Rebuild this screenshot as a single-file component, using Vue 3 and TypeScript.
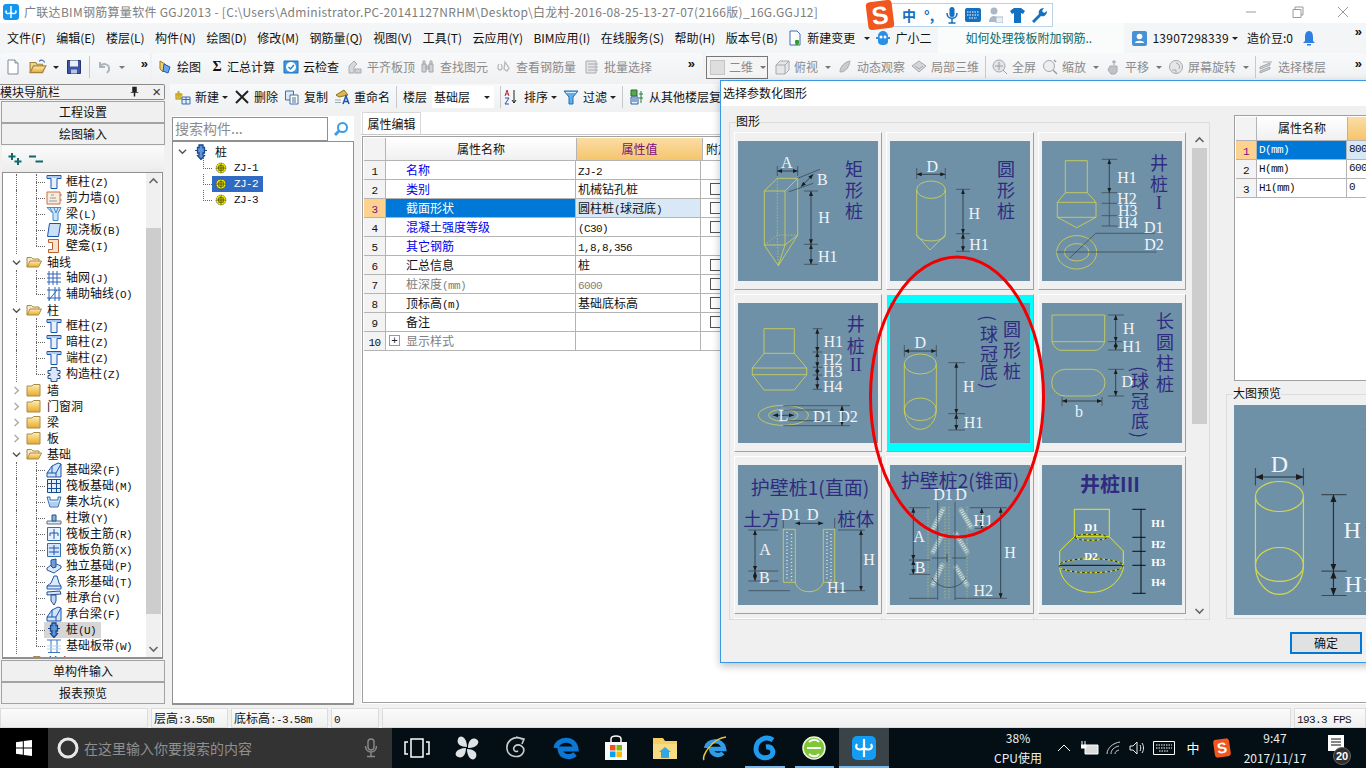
<script setup lang="ts">
interface Drawing {
  ye?: string[]
  dash?: string[]
  ln?: string[]
  dots?: string[]
  caps?: string[]
  bright?: string[]
  bk?: string[]
  mixed?: string[]
  dims?: number[][]
  labels?: (number | string)[][]
}

const run = (s: string) => s.match(/[\x00-\x7f]+|[^\x00-\x7f]+/g)?.map((t) => ({ t, l: /^[\x00-\x7f]/.test(t) })) ?? []

const stroke = (c: string, d: string, w = 1) => `<path d="${d}" fill="none" stroke="${c}" stroke-width="${w}"/>`
const shape = (f: string, c: string, d: string) => `<path d="${d}" fill="${f}" stroke="${c}"/>`
const B = '#1a54b0'
const I: Record<string, string> = {
  col: shape('#e6f0fc', B, 'M1 1.5h14v3h-4v10H5v-10H1z') + stroke('#7aa5e0', 'M1.5 3h13'),
  wall: shape('#f9ebdf', '#c8703c', 'M1 2h13v12H1z') + stroke('#999', 'M3 11h8M4 8h6M5 5h3', 1) + stroke('#c8703c', 'M14 5h2M14 10h2'),
  beam: shape('#cfe4f7', '#3f8ad0', 'M1 1.5h14l-3 6v7H7v-7z') + stroke('#3f8ad0', 'M4 2l3 5M8 2l2 5M12 2l-2 5'),
  slab: shape('#cbdff6', B, 'M3.5 1.5h11l-2 13h-11z'),
  niche: shape('#f6e2cf', '#b9602c', 'M2.5 1.5h10v13h-10v-3h4v-7h-4z'),
  grid: stroke('#2a63b8', 'M3 1v14M7 1v14M11 1v14M1 4h14M1 8h14M1 12h14'),
  aux: stroke('#2a63b8', 'M3 1v14M13 1v14M1 4h14M1 12h14M3 14l8-10M9 1v14'),
  pz: shape('#dbe7f7', '#24518f', 'M5 1.5h6v3h3v3h-2v2h2v3h-3v3H5v-3H2v-3h2v-2H2v-3h3z'),
  fbeam: shape('#cfe2f6', B, 'M1 15v-4l5-7 6-3 3 1v13z') + stroke(B, 'M1 11h9v4M6 4v7M10 11L15 2'),
  raft: shape('#e2edfa', '#174c98', 'M1.5 1.5h13v13h-13z') + stroke('#174c98', 'M5.5 1.5v13M10.5 1.5v13M1.5 5.5h13M1.5 10.5h13'),
  pit: shape('#d9e9f8', '#2f6fb8', 'M1 3h3v3h8V3h3l-3 10H4z') + stroke('#8fb5dd', 'M3 9h10M4 11h8', 1),
  ped: shape('#e4e8ee', '#56708f', 'M1 11h14v3H1z') + shape('#8fb0d9', '#24518f', 'M6 5h4v6H6z'),
  rm: shape('#e8f2fc', '#2f6fb8', 'M1.5 1.5h13v13h-13z') + stroke(B, 'M8 3v10M4 7h8M4 7v3M12 7v3'),
  rn: shape('#d6e6f8', '#2f6fb8', 'M1.5 1.5h13v13h-13z') + stroke(B, 'M8 3v10M3 6h10M3 10h10'),
  iso: shape('#dce9f8', '#1f5aa6', 'M1 10l7-5 7 3v2l-7 5-7-3z') + shape('#6f9cd6', '#1f4f98', 'M5 2l5-1v8l-3 1-2-2z'),
  strip: shape('#dce9f8', B, 'M1 15v-3l4-3 3-7h3l2 7 2 3v3z') + stroke(B, 'M1 12h14'),
  cap: shape('#dbe8f8', '#24518f', 'M1 2l13-1 1 3-14 1z') + shape('#c3d8f2', '#24518f', 'M5 5h5v6l-2 4-3-4z'),
  pile: '<path d="M6 1h4v2.500h1.500V9H10v2l1.500 0.500L8 15.500 4.500 11.500 6 11V9H4.500V3.500H6z" fill="#5f93d6" stroke="#17478f" stroke-width="1.300"/><path d="M2 6.500h3M11 6.500h3" stroke="#17478f"/>',
  band: stroke('#3a74c2', 'M1 2h14M2 14.500h12M5 2v12M11 2v12') + stroke('#bcd3ee', 'M1 8h14M1 11h14'),
  fc: '<path d="M1 4h5l1.500-1.500H14V14H1z" fill="url(#fold)" stroke="#a98a4a"/>',
  fo: '<path d="M1 13V3.500h4.500L7 5h6v2" fill="#f7e9c0" stroke="#a98a4a"/><path d="M1 13l3-6h11.500l-3 6z" fill="url(#fold)" stroke="#a98a4a"/>',
  gear: '<circle cx="8" cy="8" r="6.500" fill="#f5f100" stroke="#3a3a00" stroke-dasharray="2 1"/><path d="M8 2v12M2 8h12M5 5h6v6H5z" fill="none" stroke="#3a3a00"/>',
  doc: '<path d="M3 1h7l3 3v11H3z" fill="#fff" stroke="#7e8b9c"/><path d="M10 1v3h3" fill="#dde4ee" stroke="#7e8b9c"/>',
  open: '<path d="M1 13V4h5l1 1.500h5V7" fill="#f0d68c" stroke="#a5843f"/><path d="M1 13l3-6h11l-3 6z" fill="url(#fold)" stroke="#a5843f"/><path d="M9 3c2-2 4-1 5 1" fill="none" stroke="#3c6cb5"/>',
  save: '<path d="M1.500 1.500h13v13h-13z" fill="#3e55a5" stroke="#26356f"/><path d="M4 1.500h8v6H4z" fill="#e9eef7"/><path d="M5 10.500h6v4H5z" fill="#b8c5e0"/>',
  undo: stroke('#aeb4bb', 'M3 3v5h5M3 8c3-5 10-3 9 3l-2 3', 2),
  draw: '<path d="M3 2l5 3-2 8-3-3z" fill="#f1d36b" stroke="#9b7a1c"/><path d="M7 5l6 3-2 6-5-2z" fill="#6da5e6" stroke="#1d57b5"/>',
  cloud: '<path d="M1 2h14v12H1z" fill="#3c97e4" stroke="#1e6fb8"/><circle cx="8" cy="8" r="5" fill="#fff"/><path d="M5.500 8l2 2 3.500-4" fill="none" stroke="#1e88dd" stroke-width="1.500"/>',
  flat: '<path d="M2 14V7l5-5 3 3-3 3v6z" fill="#d6d8db" stroke="#a8acb1"/><path d="M8 14v-4h6v4z" fill="#cfd2d6" stroke="#a8acb1"/>',
  find: '<path d="M2 5h4v8H2zM9 5h4v8H9zM6 7h3v3H6z" fill="#cfd1d4" stroke="#a4a7ab"/><path d="M3 2h2v3H3zM10 2h2v3h-2z" fill="#dcdee0" stroke="#a4a7ab"/>',
  look: stroke('#b4b7bb', 'M3 5c-2 3-1 6 1 6s3-3 1-6M9 3l4 6-2 3-3-2z', 1.300),
  batch: '<path d="M2 2h10v12H2z" fill="#e4e5e7" stroke="#a9acb0"/><path d="M4 5h10M4 8h10M4 11h10" stroke="#a9acb0"/>',
  add: '<rect x="1" y="5" width="5" height="5" fill="#f5df5f" stroke="#a68a14"/><path d="M3.500 2v7M0.500 5.500h7" stroke="#c9a91f" stroke-width="2"/><path d="M7 8h8v7H7z" fill="#e4eefb" stroke="#3c6cb5"/><path d="M7 10.500h8M11 8v7" stroke="#3c6cb5"/>',
  del: stroke('#222', 'M2 2l12 12M14 2L2 14', 2),
  copy: '<path d="M1.500 2h8v9h-8z" fill="#dfe9f6" stroke="#44709f"/><path d="M6 6h8v9H6z" fill="#fff" stroke="#44709f"/><path d="M8 9h4M8 11h4M8 13h4" stroke="#44709f"/>',
  ren: '<path d="M2 6l8-5 4 5-9 2z" fill="#dbb84d" stroke="#8d7424"/><path d="M9 15l3-8 3 8M10 12.500h4" fill="none" stroke="#1d57b5" stroke-width="1.500"/><path d="M1 11h6M1 13.500h6" stroke="#9aa" />',
  sort: '<path d="M3 1l-2 6M3 1l2 6M2 5h2" fill="none" stroke="#b03030"/><path d="M1 9h4L1 15h4" fill="none" stroke="#2a50b0"/><path d="M10 1v13M8 11l2 3 2-3" fill="none" stroke="#222"/>',
  filter: '<path d="M1 2h14L10 8v7H6V8z" fill="#5fb0ea" stroke="#246fb0"/><path d="M3 3.500h10" stroke="#d8eefc"/>',
  floors: '<path d="M2 1h6v6H2z" fill="#55a84b" stroke="#2b6c24"/><path d="M2 8h7v7H2z" fill="#ecf3fb" stroke="#245ea6"/><path d="M3 10h5M3 12h5" stroke="#245ea6"/><path d="M12 2v12M10 5h4M10 9h4" stroke="#2a7a40"/>',
  cube: '<path d="M2 6l4-4h9v9l-4 4H2z" fill="#e6e7e9" stroke="#a7a9ad"/><path d="M2 6h9v9M11 6l4-4" fill="none" stroke="#a7a9ad"/>',
  orbit: '<path d="M3 13c0-6 5-10 10-11-1 6-4 11-10 11z" fill="#c9cccf" stroke="#a9acb0"/>',
  local: '<path d="M1 7l7-5 7 5-7 6z" fill="#d4d6d9" stroke="#a7a9ad"/><path d="M4 7l4 3 4-3" fill="none" stroke="#a7a9ad"/>',
  full: '<circle cx="7" cy="7" r="6" fill="#e2e4e7" stroke="#a7a9ad"/><path d="M7 3v8M3 7h8M11 11l4 4" stroke="#9a9da1" fill="none"/>',
  zoom: '<circle cx="7" cy="7" r="5.500" fill="#eceef0" stroke="#a7a9ad"/><path d="M11 11l4 4M12 1l2 2" stroke="#9a9da1" stroke-width="1.500"/>',
  pan: '<path d="M5 7h7v6l-2 2H6l-3-4z" fill="#bfc2c6" stroke="#a7a9ad"/><path d="M9 1v5M7 3h4" stroke="#9a9da1"/>',
  rot: '<circle cx="8" cy="8" r="6.500" fill="#e5e6e8" stroke="#a7a9ad"/><path d="M4 11h4v3M8 4a4 4 0 0 1 3 6" fill="none" stroke="#a7a9ad"/>',
  stack: '<path d="M2 8l10-4v2L2 10zM2 12l10-4v2L2 14z" fill="#cfd2d5" stroke="#a7a9ad"/><path d="M5 3h9" stroke="#a7a9ad"/>',
  nd: '<path d="M3 1h7l3 3v11H3z" fill="#fff" stroke="#3c6cb5"/><path d="M10 10v5M8 12h4" stroke="#2f9b32" stroke-width="3"/>',
  bear: '<path d="M3 6a5 5 0 0 1 10 0v5c0 3-2 4-5 4s-5-1-5-4z" fill="#2b8fe6"/><circle cx="6" cy="7" r="1.500" fill="#fff"/><circle cx="10" cy="7" r="1.500" fill="#fff"/><path d="M1 8h2M13 8h2" stroke="#2b8fe6" stroke-width="2"/>',
  user: '<rect x="1" y="1" width="15" height="15" rx="2" fill="#4791d6"/><circle cx="8.500" cy="6.500" r="2.800" fill="#fff"/><path d="M4 13c0-3 9-3 9 0z" fill="#fff"/>',
  bell: '<path d="M8 1c3 0 4 3 4 6v4l2 2H2l2-2V7c0-3 1-6 4-6z" fill="#2f7fe0"/><path d="M6 14h4v1.500H6z" fill="#2f7fe0"/>',
  search: '<circle cx="9.500" cy="6.500" r="4.500" fill="#fff" stroke="#3f9be4" stroke-width="2"/><path d="M6 10l-4 4" stroke="#3f9be4" stroke-width="3"/>',
  plus: '<path d="M5 2v7M1.500 5.500h7" stroke="#0f6a6a" stroke-width="2"/><path d="M11 7v7M7.500 10.500h7" stroke="#0f6a6a" stroke-width="2"/>',
  minus: '<path d="M1 5.500h7M7.500 10.500h7.500" stroke="#0f6a6a" stroke-width="2"/>',
  ppin: '<path d="M3 1h6v7h2v1H7v5H5V9H1V8h2z" fill="#222"/>'
}

const menu = ['文件(F)', '编辑(E)', '楼层(L)', '构件(N)', '绘图(D)', '修改(M)', '钢筋量(Q)', '视图(V)', '工具(T)', '云应用(Y)', 'BIM应用(I)', '在线服务(S)', '帮助(H)', '版本号(B)']

const bar2 = [
  { ic: 'draw', t: '绘图' },
  { sig: true, t: '汇总计算' },
  { ic: 'cloud', t: '云检查' },
  { ic: 'flat', t: '平齐板顶', off: true },
  { ic: 'find', t: '查找图元', off: true },
  { ic: 'look', t: '查看钢筋量', off: true },
  { ic: 'batch', t: '批量选择', off: true }
]
const bar3a = [
  { ic: 'cube', t: '俯视', off: true, arrow: true },
  { ic: 'orbit', t: '动态观察', off: true },
  { ic: 'local', t: '局部三维', off: true }
]
const bar3b = [
  { ic: 'full', t: '全屏', off: true },
  { ic: 'zoom', t: '缩放', off: true, arrow: true },
  { ic: 'pan', t: '平移', off: true, arrow: true },
  { ic: 'rot', t: '屏幕旋转', off: true, arrow: true }
]

const tree = [
  { k: 'c', ic: 'col', t: '框柱(Z)' },
  { k: 'c', ic: 'wall', t: '剪力墙(Q)' },
  { k: 'c', ic: 'beam', t: '梁(L)' },
  { k: 'c', ic: 'slab', t: '现浇板(B)' },
  { k: 'e', ic: 'niche', t: '壁龛(I)' },
  { k: 'o', ic: 'fo', t: '轴线' },
  { k: 'c', ic: 'grid', t: '轴网(J)' },
  { k: 'e', ic: 'aux', t: '辅助轴线(O)' },
  { k: 'o', ic: 'fo', t: '柱' },
  { k: 'c', ic: 'col', t: '框柱(Z)' },
  { k: 'c', ic: 'col', t: '暗柱(Z)' },
  { k: 'c', ic: 'col', t: '端柱(Z)' },
  { k: 'e', ic: 'pz', t: '构造柱(Z)' },
  { k: 'f', ic: 'fc', t: '墙' },
  { k: 'f', ic: 'fc', t: '门窗洞' },
  { k: 'f', ic: 'fc', t: '梁' },
  { k: 'f', ic: 'fc', t: '板' },
  { k: 'o', ic: 'fo', t: '基础' },
  { k: 'c', ic: 'fbeam', t: '基础梁(F)' },
  { k: 'c', ic: 'raft', t: '筏板基础(M)' },
  { k: 'c', ic: 'pit', t: '集水坑(K)' },
  { k: 'c', ic: 'ped', t: '柱墩(Y)' },
  { k: 'c', ic: 'rm', t: '筏板主筋(R)' },
  { k: 'c', ic: 'rn', t: '筏板负筋(X)' },
  { k: 'c', ic: 'iso', t: '独立基础(P)' },
  { k: 'c', ic: 'strip', t: '条形基础(T)' },
  { k: 'c', ic: 'cap', t: '桩承台(V)' },
  { k: 'c', ic: 'fbeam', t: '承台梁(F)' },
  { k: 'c', ic: 'pile', t: '桩(U)', sel: true },
  { k: 'e', ic: 'band', t: '基础板带(W)' },
  { k: 'f', ic: 'fc', t: '其它' }
]

const props = [
  { n: '1', a: '名称', v: 'ZJ-2', c: 'blue', chk: false },
  { n: '2', a: '类别', v: '机械钻孔桩', c: 'blue', chk: true },
  { n: '3', a: '截面形状', v: '圆柱桩(球冠底)', c: 'sel', chk: true },
  { n: '4', a: '混凝土强度等级', v: '(C30)', c: 'blue', chk: true },
  { n: '5', a: '其它钢筋', v: '1,8,8,356', c: 'blue', chk: false },
  { n: '6', a: '汇总信息', v: '桩', c: '', chk: true },
  { n: '7', a: '桩深度(mm)', v: '6000', c: 'gray', chk: true },
  { n: '8', a: '顶标高(m)', v: '基础底标高', c: '', chk: true },
  { n: '9', a: '备注', v: '', c: '', chk: true },
  { n: '10', a: '显示样式', v: '', c: 'gray', chk: false, plus: true }
]

const params = [
  { n: '1', a: 'D(mm)', v: '800', sel: true },
  { n: '2', a: 'H(mm)', v: '6000', sel: false },
  { n: '3', a: 'H1(mm)', v: '0', sel: false }
]

const selected: Drawing = {
  ye: ['M14.3 61a16 10 0 1 0 32 0a16 10 0 1 0-32 0', 'M14.3 61V107M46.300 61V107', 'M14.3 107a16 12 0 0 1 32 0', 'M14.3 107a16 10.600 0 0 0 32 0', 'M14.3 107a16 19.300 0 0 0 32 0'],
  ln: ['M14.3 42V53.700M46.300 42V53.700', 'M58.300 59.700H75M58.300 110.700H75M58.300 127H75'],
  dims: [[14.3, 48, 46.3, 48], [66.3, 59.7, 66.3, 110.7], [66.3, 110.7, 66.3, 127]],
  labels: [
    [30.3, 39, 'D'], [78.7, 83.5, 'H'], [83.5, 119, 'H1'],
    [122, 25, '圆', 'c'], [122, 46, '形', 'c'], [122, 67, '桩', 'c'],
    [99, 15, '(', 'c rp'], [99, 30, '球', 'c'], [99, 50, '冠', 'c'], [99, 68, '底', 'c'], [99, 83, ')', 'c rp']
  ]
}

const cards: Drawing[] = [
  {
    ye: ['M39.3 37.300H59.700L47 50H26.300Z', 'M26.300 50V104H47V50', 'M59.700 37.300V94L47 104', 'M26.300 104L40.300 124.700L47 104', 'M59.700 94L40.300 124.700'],
    dash: ['M39.3 37.300V94', 'M26.300 104L39.300 94H59.700', 'M39.300 94L40.300 124.700'],
    ln: ['M39.300 25V35M59.700 25V35', 'M59.700 37.300L82 28.300M51 50.700L75.300 42.300', 'M66 50H80M66 103.300H80M66 123.300H80'],
    dims: [[39.3, 30, 59.7, 30], [75.3, 33.3, 63, 45.7], [73, 50, 73, 103.3], [73, 103.3, 73, 123.3]],
    labels: [[48.7, 21, 'A'], [84.3, 38, 'B'], [86, 76.3, 'H'], [89.7, 115, 'H1'], [116, 27, '矩', 'c'], [116, 48, '形', 'c'], [116, 69, '桩', 'c']]
  },
  {
    ye: ['M26.700 48.700a14.300 8.700 0 1 0 28.600 0a14.300 8.700 0 1 0-28.600 0', 'M26.700 48.700V94M55.300 48.700V94', 'M26.700 94a14.300 6 0 0 0 28.600 0', 'M26.700 94L40 109L55.300 94'],
    ln: ['M26.700 27V38M55.300 27V38', 'M66 48.300H80M66 92.700H80M66 110.300H80'],
    dims: [[26.7, 33.3, 55.3, 33.3], [73, 48.3, 73, 92.7], [73, 92.7, 73, 110.3]],
    labels: [[42.3, 25, 'D'], [84.3, 72, 'H'], [89, 103, 'H1'], [116, 27, '圆', 'c'], [116, 48, '形', 'c'], [116, 69, '桩', 'c']]
  },
  {
    ye: ['M23.300 19.700H45.300V51.700H23.300Z', 'M45.300 51.700L54 61.300V76.300L34.700 86.700L15.300 76.300V61.300L23.300 51.700', 'M15.300 61.300H54M15.300 76.300H54', 'M14.700 111.300a20 16.700 0 1 0 40 0a20 16.700 0 1 0-40 0', 'M22.400 111.300a12.300 8.700 0 1 0 24.600 0a12.300 8.700 0 1 0-24.600 0'],
    ln: ['M59.700 18.300H75.300M59.700 51.700H75.300M59.700 62.300H75.300M59.700 74.700H75.300M59.700 85H75.300M67.300 51.700V85', 'M27.300 117.300L53.700 92.300H113', 'M14.700 111H114.700'],
    dims: [[67.3, 18.3, 67.3, 51.7]],
    labels: [[85, 36, 'H1'], [85, 57, 'H2'], [85.7, 69, 'H3'], [85.7, 81.7, 'H4'], [111.7, 86.3, 'D1'], [112, 103, 'D2'], [117, 21, '井', 'c'], [117, 42, '桩', 'c'], [117, 62, 'I', 'c s']]
  },
  {
    ye: ['M26 25.700H56.300V50.300H26Z', 'M56.300 50.300L68.700 65V71.700L56.300 87H26L14.300 71.700V65L26 50.300', 'M14.300 65H68.700M14.300 71.700H68.700', 'M20.300 112.300a25 10 0 1 0 50 0a25 10 0 1 0-50 0', 'M30.600 112.300a14.700 6 0 1 0 29.400 0a14.700 6 0 1 0-29.400 0'],
    ln: ['M74.700 25.700H84.300M74.700 49H84.300M74.700 64.300H84.300M74.700 72H84.300M74.700 86.300H84.300', 'M45.300 102.700H112M45.300 107H90M45.300 117.700H90M45.300 122.700H112'],
    dims: [[79.3, 25.7, 79.3, 49], [79.3, 49, 79.3, 64.3], [79.3, 64.3, 79.3, 72], [79.3, 72, 79.3, 86.3], [104, 102.7, 104, 122.7], [35, 112.3, 56, 112.3]],
    labels: [[95.3, 38.7, 'H1'], [94.7, 56, 'H2'], [94.7, 68.7, 'H3'], [94.7, 83.7, 'H4'], [45.3, 112, 'L'], [84.7, 113.7, 'D1'], [110, 113.7, 'D2'], [117.7, 20, '井', 'c'], [117.7, 42, '桩', 'c'], [117.7, 62, 'II', 'c s']]
  },
  selected,
  {
    ye: ['M10 12H62.700V38.700H10Z', 'M10 38.700C12 44 15 47.300 20 47.300H52.700C57 47.300 60.700 44 62.700 38.700', 'M23 66.300H49.700A13.300 13.300 0 0 1 49.700 93H23A13.300 13.300 0 0 1 23 66.300Z'],
    ln: ['M66 12H82M66 38.700H82M66 47H82', 'M66 66.300H82M66 93H82', 'M20 94V103M60 94V103'],
    dims: [[73.7, 12, 73.7, 38.7], [73.7, 38.7, 73.7, 47], [73.7, 66.3, 73.7, 93], [20, 98, 60, 98]],
    labels: [[86.7, 25.3, 'H'], [90, 43.7, 'H1'], [85.3, 78.7, 'D'], [37, 108, 'b'], [123, 17, '长', 'c'], [123, 38, '圆', 'c'], [123, 59, '柱', 'c'], [123, 80, '桩', 'c'], [98, 66, '(', 'c rp'], [98, 77, '球', 'c'], [98, 97, '冠', 'c'], [98, 117, '底', 'c'], [98, 132, ')', 'c rp']]
  },
  {
    ye: ['M45.300 64.300H57.300V117.300H45.300Z', 'M85.300 64.300H96.700V117.300H85.300Z', 'M57.300 117.300C59 124 65 126.700 71 126.700C77 126.700 83 124 85.300 117.300'],
    dots: ['M49 67V116', 'M53.500 69V116', 'M89 67V116', 'M93 69V116'],
    ln: ['M10.300 65H40.300M10.300 106H40.300M10.300 116H40.300M10.300 125.700H52', 'M100 65H127M90 125.700H127', 'M45.300 53V63M96.700 53V63'],
    dims: [[57.3, 58.3, 85.3, 58.3], [17, 65, 17, 106], [17, 106, 17, 116], [123, 65, 123, 125.700]],
    labels: [[72, 21.700, '护壁桩1(直面)', 'c t'], [23.700, 53.300, '土方', 'c t2'], [117.700, 53.300, '桩体', 'c t2'], [52.700, 49.300, 'D1'], [74.700, 49.300, 'D'], [27, 84.300, 'A'], [26.300, 112.300, 'B'], [131, 94, 'H'], [98.700, 122.300, 'H1']]
  },
  {
    caps: ['M43 64L53 44', 'M71 45L81 62', 'M43 87L52 70', 'M66 69L77 87', 'M43 120L52 100', 'M66 102L77 120'],
    dash: ['M38 41.700V135M77 41.700V135M55 41.700V135M59 41.700V135'],
    ln: ['M47.700 36.700V135M65 36.700V135', 'M19 42.700H40M19 95H40M19 109.300H40M19 133.300H47', 'M80 42.700H116.700M65 133.300H116.700M85 63.300H98', 'M42 113A20 20 0 0 0 76 113', 'M42 93H57M62 93H76M57 89V97'],
    dims: [[23.3, 42.7, 23.3, 95], [23.3, 95, 23.3, 109.3], [110.7, 42.7, 110.7, 133.3], [91.7, 43.3, 91.7, 63.3]],
    labels: [[70, 14, '护壁桩2(锥面)', 'c t'], [53, 29.300, 'D1'], [71, 29.300, 'D'], [93.300, 55, 'H1'], [29, 71.700, 'A'], [30, 102.700, 'B'], [120, 87.300, 'H'], [93.300, 125.700, 'H2']]
  },
  {
    bright: ['M32.300 44.300H67.300V71.700H32.300Z', 'M67.300 71.700L81.300 86V103.300C78 117 65 127.300 49.700 127.300C32 127.300 20 117 17.700 103.300V86L32.300 71.700'],
    mixed: ['M33 72.300a16 3 0 1 0 32 0a16 3 0 1 0-32 0', 'M17 100.700a32 7 0 1 0 64 0a32 7 0 1 0-64 0'],
    bk: ['M17 100.300H82', 'M99 44.300V128.300', 'M90.300 44.300H103.700M90.300 72.300H103.700M90.300 86.300H103.700M90.300 100.300H103.700M90.300 128.300H103.700'],
    labels: [[68, 18.300, '井桩III', 'c b'], [49, 61.700, 'D1', 'b2'], [49, 91, 'D2', 'b2'], [116.300, 58.300, 'H1', 'b2'], [116.300, 79.300, 'H2', 'b2'], [116.300, 97.300, 'H3', 'b2'], [116.300, 116.700, 'H4', 'b2']]
  }
]

const apps = ['tv', 'wheel', 'swirl', 'edge', 'store', 'folder', 'ie', 'gapp', 'green', 'active']
</script>

<template>
  <div class="app">
    <svg class="defs" width="0" height="0" aria-hidden="true">
      <defs>
        <linearGradient id="fold" x1="0" y1="0" x2="0" y2="1">
          <stop offset="0" stop-color="#fdeeb2" />
          <stop offset="1" stop-color="#e8a92c" />
        </linearGradient>
        <marker id="arw" viewBox="0 0 10 10" refX="10" refY="5" markerWidth="5" markerHeight="5" markerUnits="userSpaceOnUse" orient="auto-start-reverse">
          <path d="M0 1L10 5L0 9z" fill="#1c1c1c" />
        </marker>
      </defs>
    </svg>

    <header class="title">
      <svg class="logo" viewBox="0 0 16 16">
        <rect width="16" height="16" rx="3" fill="#1296f0" />
        <path d="M8 2v12M3.500 6.500c-2 3 2 4 4.500 2 2.500 2 6.500 1 4.500-2" fill="none" stroke="#fff" stroke-width="1.500" />
      </svg>
      <span class="ttext">广联达BIM钢筋算量软件 GGJ2013 - [C:\Users\Administrator.PC-20141127NRHM\Desktop\白龙村-2016-08-25-13-27-07(2166版)_16G.GGJ12]</span>
      <div class="wctl">
        <svg viewBox="0 0 46 20"><path d="M18 10h10" stroke="#9a9a9a" /></svg>
        <svg viewBox="0 0 46 20"><path d="M19 7.500h8v8h-8zM21 7V5h8v8h-2" fill="none" stroke="#9a9a9a" /></svg>
        <svg viewBox="0 0 46 20"><path d="M18 5l10 10M28 5L18 15" stroke="#9a9a9a" /></svg>
      </div>
    </header>

    <nav class="menubar">
      <span v-for="m in menu" :key="m" class="mi">{{ m }}</span>
      <svg class="ic nd" viewBox="0 0 16 16" v-html="I.nd"></svg>
      <span class="mi2">新建变更</span>
      <span class="drop"></span>
      <svg class="ic bear" viewBox="0 0 16 16" v-html="I.bear"></svg>
      <span class="mi3">广小二</span>
      <div class="notice">如何处理筏板附加钢筋..</div>
      <svg class="ic user" viewBox="0 0 17 17" v-html="I.user"></svg>
      <span class="phone">13907298339</span>
      <span class="drop d2"></span>
      <span class="bean">造价豆:0</span>
      <svg class="ic bell" viewBox="0 0 16 16" v-html="I.bell"></svg>
      <span class="more mend">»</span>
    </nav>

    <div class="toolbar">
      <div class="band b1">
        <svg class="ic" viewBox="0 0 16 16" v-html="I.doc"></svg>
        <svg class="ic o1" viewBox="0 0 16 16" v-html="I.open"></svg>
        <span class="drop"></span>
        <svg class="ic" viewBox="0 0 16 16" v-html="I.save"></svg>
        <i class="sep"></i>
        <svg class="ic" viewBox="0 0 16 16" v-html="I.undo"></svg>
        <span class="drop gd"></span>
        <span class="more mb">»</span>
      </div>
      <div class="band b2">
        <div v-for="b in bar2" :key="b.t" class="ti" :class="{ off: b.off }">
          <span v-if="b.sig" class="sigma">Σ</span>
          <svg v-else class="ic" viewBox="0 0 16 16" v-html="I[b.ic as string]"></svg>
          <span>{{ b.t }}</span>
        </div>
        <span class="more mr">»</span>
      </div>
      <div class="band b3">
        <div class="combo2">
          <span class="sq"></span><span>二维</span><span class="drop gd"></span>
        </div>
        <div v-for="b in bar3a" :key="b.t" class="ti off">
          <svg class="ic" viewBox="0 0 16 16" v-html="I[b.ic]"></svg>
          <span>{{ b.t }}</span><span v-if="b.arrow" class="drop gd"></span>
        </div>
        <i class="sep"></i>
        <div v-for="b in bar3b" :key="b.t" class="ti off">
          <svg class="ic" viewBox="0 0 16 16" v-html="I[b.ic]"></svg>
          <span>{{ b.t }}</span><span v-if="b.arrow" class="drop gd"></span>
        </div>
        <i class="sep s2"></i>
        <div class="ti off">
          <svg class="ic" viewBox="0 0 16 16" v-html="I.stack"></svg>
          <span>选择楼层</span>
        </div>
        <span class="more mr">»</span>
      </div>
    </div>

    <main class="main">
      <aside class="nav">
        <div class="navhead">
          <span>模块导航栏</span>
          <svg class="pin" viewBox="0 0 12 16" v-html="I.ppin"></svg>
          <span class="navx">×</span>
        </div>
        <button class="navbtn first">工程设置</button>
        <button class="navbtn">绘图输入</button>
        <div class="navtools">
          <svg class="ic" viewBox="0 0 16 16" v-html="I.plus"></svg>
          <svg class="ic" viewBox="0 0 16 16" v-html="I.minus"></svg>
        </div>
        <div class="treebox">
          <div class="rows">
            <div v-for="(r, i) in tree" :key="i" class="row" :class="'k-' + r.k">
              <template v-if="r.k === 'o' || r.k === 'f'">
                <svg class="chev" viewBox="0 0 10 10"><path :d="r.k === 'o' ? 'M1 3l4 4 4-4' : 'M3 1l4 4-4 4'" fill="none" :stroke="r.k === 'o' ? '#555' : '#aaa'" stroke-width="1.600" /></svg>
                <svg class="ic fold" viewBox="0 0 16 16" v-html="I[r.ic]"></svg>
                <span class="lbl">{{ r.t }}</span>
              </template>
              <template v-else>
                <div class="leaf" :class="{ cur: r.sel }">
                  <svg class="ic" viewBox="0 0 16 16" v-html="I[r.ic]"></svg>
                  <span class="lbl"><span v-for="(s, j) in run(r.t)" :key="j" :class="{ l: s.l }">{{ s.t }}</span></span>
                </div>
              </template>
            </div>
          </div>
          <div class="vs vs1">
            <svg class="ar" viewBox="0 0 10 8"><path d="M1 6l4-4 4 4" fill="none" stroke="#666" stroke-width="1.600" /></svg>
            <div class="gap1"></div>
            <div class="thumb th1"></div>
            <div class="fill"></div>
            <svg class="ar" viewBox="0 0 10 8"><path d="M1 2l4 4 4-4" fill="none" stroke="#666" stroke-width="1.600" /></svg>
          </div>
        </div>
        <button class="navbtn below">单构件输入</button>
        <button class="navbtn">报表预览</button>
      </aside>

      <section class="work">
        <div class="wtools">
          <div class="ti"><svg class="ic" viewBox="0 0 16 16" v-html="I.add"></svg><span>新建</span><span class="drop"></span></div>
          <div class="ti"><svg class="ic" viewBox="0 0 16 16" v-html="I.del"></svg><span>删除</span></div>
          <div class="ti"><svg class="ic" viewBox="0 0 16 16" v-html="I.copy"></svg><span>复制</span></div>
          <div class="ti"><svg class="ic" viewBox="0 0 16 16" v-html="I.ren"></svg><span>重命名</span></div>
          <i class="sep"></i>
          <span>楼层</span>
          <div class="floorsel"><span>基础层</span><span class="drop"></span></div>
          <i class="sep s3"></i>
          <div class="ti"><svg class="ic" viewBox="0 0 16 16" v-html="I.sort"></svg><span>排序</span><span class="drop"></span></div>
          <div class="ti"><svg class="ic" viewBox="0 0 16 16" v-html="I.filter"></svg><span>过滤</span><span class="drop"></span></div>
          <i class="sep"></i>
          <div class="ti"><svg class="ic" viewBox="0 0 16 16" v-html="I.floors"></svg><span>从其他楼层复制构件</span></div>
        </div>
        <div class="wbody">
          <div class="comp">
            <div class="searchrow">
              <div class="sinput">搜索构件...</div>
              <div class="sbtn"><svg class="ic" viewBox="0 0 16 16" v-html="I.search"></svg></div>
            </div>
            <div class="ctree">
              <div class="cn root">
                <svg class="chev" viewBox="0 0 10 10"><path d="M1 3l4 4 4-4" fill="none" stroke="#555" stroke-width="1.600" /></svg>
                <svg class="ic" viewBox="0 0 16 16" v-html="I.pile"></svg>
                <span>桩</span>
              </div>
              <div v-for="z in ['ZJ-1', 'ZJ-2', 'ZJ-3']" :key="z" class="cn kid">
                <div class="zrow" :class="{ on: z === 'ZJ-2' }">
                  <svg class="ic g" viewBox="0 0 16 16" v-html="I.gear"></svg>
                  <span class="zn">{{ z }}</span>
                </div>
              </div>
            </div>
          </div>
          <div class="prop">
            <div class="tabs"><span class="tab">属性编辑</span></div>
            <div class="pbox">
              <div class="phead">
                <span class="p0"></span><span class="p1">属性名称</span><span class="p2 hot">属性值</span><span class="p3">附加</span>
              </div>
              <div v-for="p in props" :key="p.n" class="prow" :class="p.c">
                <span class="p0 num"><span class="l">{{ p.n }}</span></span>
                <span class="p1 name">
                  <span v-if="p.plus" class="pls">+</span>
                  <span v-for="(s, j) in run(p.a)" :key="j" :class="{ l: s.l }">{{ s.t }}</span>
                </span>
                <span class="p2 val"><span v-for="(s, j) in run(p.v)" :key="j" :class="{ l: s.l }">{{ s.t }}</span></span>
                <span class="p3"><i v-if="p.chk" class="chk"></i></span>
              </div>
            </div>
          </div>
        </div>
      </section>
    </main>

    <footer class="status">
      <span class="sc w0"></span>
      <span class="sc w1">层高<span class="l">:3.55m</span></span>
      <span class="sc w2">底标高<span class="l">:-3.58m</span></span>
      <span class="sc w3"><span class="l">0</span></span>
      <span class="sc w4"></span>
      <span class="sc w5"><span class="l">193.3 FPS</span></span>
    </footer>

    <div class="taskbar">
      <div class="start">
        <svg width="16" height="16" viewBox="0 0 16 16"><path d="M0 2.300l6.800-1V7.500H0zM7.800 1.100L16 0v7.500H7.800zM0 8.500h6.800v6.200L0 13.700zM7.800 8.500H16V16l-8.200-1.100z" fill="#fff" /></svg>
      </div>
      <div class="tsearch">
        <svg width="24" height="24" viewBox="0 0 24 24"><circle cx="12" cy="12" r="9" fill="none" stroke="#e8e8e8" stroke-width="3" /></svg>
        <span>在这里输入你要搜索的内容</span>
        <svg class="tmic" width="14" height="20" viewBox="0 0 14 20"><rect x="4" y="1" width="6" height="11" rx="3" fill="none" stroke="#8a8a8a" stroke-width="1.400" /><path d="M1.500 8c0 8 11 8 11 0M7 14v4M3 18.500h8" fill="none" stroke="#8a8a8a" stroke-width="1.400" /></svg>
      </div>
      <div v-for="a in apps" :key="a" class="tapp" :class="'a-' + a">
        <svg width="28" height="28" viewBox="0 0 28 28">
          <template v-if="a === 'tv'"><path d="M8 5h12v18H8zM5 8H2v12h3M23 8h3v12h-3" fill="none" stroke="#fff" stroke-width="1.500" /></template>
          <template v-else-if="a === 'wheel'">
            <path d="M14 13C8 13 3 10 5 5S14 3 14 13zM15 14C15 8 18 3 23 5S25 14 15 14zM14 15C20 15 25 18 23 23S14 25 14 15zM13 14C13 20 10 25 5 23S3 14 13 14z" fill="#dfe3e6" />
          </template>
          <template v-else-if="a === 'swirl'"><path d="M20 5C12 1 4 7 5 15C6 23 17 25 21 19C24 13 17 9 13 12C10 15 13 19 16 17M14 3L22 5L20 10" fill="none" stroke="#c9cdd0" stroke-width="1.600" /></template>
          <template v-else-if="a === 'edge'"><path d="M4 14C5 5 22 2 24 15H8C9 24 19 24 23 20" fill="none" stroke="#0b78d6" stroke-width="5" /></template>
          <template v-else-if="a === 'store'">
            <path d="M3 8h22v18H3z" fill="#fafafa" /><path d="M9 8V5c0-4 10-4 10 0v3" fill="none" stroke="#fafafa" stroke-width="1.500" />
            <path d="M8 11h5.500v5.500H8z" fill="#f25022" /><path d="M14.500 11H20v5.500h-5.500z" fill="#7fba00" /><path d="M8 17.500h5.500V23H8z" fill="#00a4ef" /><path d="M14.500 17.500H20V23h-5.500z" fill="#ffb900" />
          </template>
          <template v-else-if="a === 'folder'">
            <path d="M2 4h10l2 3h12v18H2z" fill="#f5cf65" /><path d="M2 10h24v15H2z" fill="#f8dc84" /><path d="M14 13l6 5h-2v6h-8v-6H8z" fill="#35a7de" />
          </template>
          <template v-else-if="a === 'ie'">
            <path d="M5 14C6 6 21 4 23 15H10C11 22 19 22 22 19" fill="none" stroke="#2f9ce8" stroke-width="4.500" />
            <path d="M3 26C0 22 12 4 25 3" fill="none" stroke="#f2c230" stroke-width="1.500" />
          </template>
          <template v-else-if="a === 'gapp'">
            <path d="M22 6C14 1 5 7 5 15C5 23 14 26 20 22C24 18 21 12 15 13" fill="none" stroke="#1f9cf0" stroke-width="5" />
          </template>
          <template v-else-if="a === 'green'">
            <circle cx="14" cy="14" r="11" fill="#7dc935" stroke="#eef5e0" stroke-width="1.500" /><path d="M7 14h14M9 8c3-3 8-3 10 0M9 20c3 3 8 3 10 0" fill="none" stroke="#fff" stroke-width="2" />
          </template>
          <template v-else>
            <rect x="2" y="2" width="24" height="24" rx="5" fill="#129cf3" />
            <path d="M14 5v18M7 10c-3 5 3 7 7 4 4 3 10 1 7-4" fill="none" stroke="#fff" stroke-width="2.200" />
          </template>
        </svg>
      </div>
      <div class="tray">
        <div class="cpu"><span>38%</span><span>CPU使用</span></div>
        <div class="tc c1"><svg width="14" height="8" viewBox="0 0 14 8"><path d="M1 7l6-6 6 6" fill="none" stroke="#fff" /></svg></div>
        <div class="tc c2"><svg width="18" height="14" viewBox="0 0 18 14"><path d="M4 4h13v9H4z" fill="#ddd" stroke="#fff" /><path d="M1 0v4M4 0v4M0 4h5v3H0z" fill="#fff" stroke="#fff" /></svg></div>
        <div class="tc c3"><svg width="16" height="14" viewBox="0 0 16 14"><path d="M1 13C1 7 7 2 14 1M5 13c0-4 3-7 8-8M9 13c0-2 1-3 4-4" fill="none" stroke="#ccc" /></svg></div>
        <div class="tc c4"><svg width="16" height="14" viewBox="0 0 16 14"><path d="M1 5h3l4-4v12l-4-4H1zM11 4c1 2 1 4 0 6M13 2c2 3 2 7 0 10" fill="none" stroke="#eee" /></svg></div>
        <div class="tc c5"><svg width="22" height="14" viewBox="0 0 22 14"><path d="M.500.500h21v13H.500z" fill="none" stroke="#fff" /><path d="M3 4h16M3 7h16M6 10h10" stroke="#fff" stroke-dasharray="1.500 1" fill="none" /></svg></div>
        <div class="tc c6">中</div>
        <div class="tc c7"><span class="sg">S</span></div>
        <div class="clock"><span>9:47</span><span>2017/11/17</span></div>
        <div class="notif">
          <svg width="16" height="16" viewBox="0 0 16 16"><path d="M0 0h16v16H0z" fill="#fff" /><path d="M3 4h10M3 7h10M3 10h10" stroke="#111" /></svg>
          <span class="badge">20</span>
        </div>
      </div>
    </div>

    <section class="dialog">
      <div class="dhead">选择参数化图形</div>
      <div class="dbody">
        <div class="grp shapes">
          <span class="legend">图形</span>
          <div class="shapeinner">
            <div class="cardgrid">
              <div v-for="(d, i) in cards" :key="i" class="card" :class="{ picked: i === 4 }">
                <svg class="dg" viewBox="0 0 140 140">
                  <path v-for="p in d.ye" :key="p" class="ye" :d="p" />
                  <path v-for="p in d.dash" :key="p" class="dash" :d="p" />
                  <path v-for="p in d.caps" :key="p" class="capb" :d="p" />
                  <path v-for="p in d.caps" :key="p + 'x'" class="capd" :d="p" />
                  <path v-for="p in d.dots" :key="p" class="dots" :d="p" />
                  <path v-for="p in d.ln" :key="p" class="ln" :d="p" />
                  <path v-for="p in d.bright" :key="p" class="bright" :d="p" />
                  <path v-for="p in d.bk" :key="p" class="bk" :d="p" />
                  <path v-for="p in d.mixed" :key="p" class="bright" :d="p" />
                  <path v-for="p in d.mixed" :key="p + 'm'" class="mix" :d="p" />
                  <line v-for="(l, j) in d.dims" :key="j" class="dm" :x1="l[0]" :y1="l[1]" :x2="l[2]" :y2="l[3]" marker-start="url(#arw)" marker-end="url(#arw)" />
                  <text v-for="(t, j) in d.labels" :key="j" :x="t[0]" :y="t[1]" :class="t[3] ?? 'w'">{{ t[2] }}</text>
                </svg>
              </div>
              <div class="card"></div>
              <div class="card"></div>
              <div class="card"></div>
            </div>
            <div class="vs vs2">
              <svg class="ar" viewBox="0 0 10 8"><path d="M1 6l4-4 4 4" fill="none" stroke="#666" stroke-width="1.600" /></svg>
              <div class="thumb th2"></div>
              <div class="fill"></div>
              <svg class="ar" viewBox="0 0 10 8"><path d="M1 2l4 4 4-4" fill="none" stroke="#666" stroke-width="1.600" /></svg>
            </div>
          </div>
        </div>
        <div class="dright">
          <div class="pgrid">
            <div class="gh"><span class="g0"></span><span class="g1">属性名称</span><span class="g2 hot"></span></div>
            <div v-for="p in params" :key="p.n" class="gr" :class="{ sel: p.sel }">
              <span class="g0 num"><span class="l">{{ p.n }}</span></span>
              <span class="g1 l pname">{{ p.a }}</span>
              <span class="g2 l pval">{{ p.v }}</span>
            </div>
          </div>
          <div class="grp preview">
            <span class="legend">大图预览</span>
            <svg class="big" viewBox="0 0 140 140">
              <path v-for="p in selected.ye" :key="p" class="ye" :d="p" />
              <path v-for="p in selected.ln" :key="p" class="ln" :d="p" />
              <line v-for="(l, j) in selected.dims" :key="j" class="dm" :x1="l[0]" :y1="l[1]" :x2="l[2]" :y2="l[3]" marker-start="url(#arw)" marker-end="url(#arw)" />
              <text v-for="(t, j) in selected.labels" :key="j" :x="t[0]" :y="t[1]" :class="t[3] ?? 'w'">{{ t[2] }}</text>
            </svg>
          </div>
        </div>
      </div>
      <div class="dfoot"><button class="ok">确定</button></div>
    </section>

    <svg class="redring" width="190" height="300" viewBox="0 0 190 300">
      <ellipse cx="95" cy="150" rx="86.500" ry="140" fill="none" stroke="#f00000" stroke-width="3" />
    </svg>

    <div class="ime">
      <span class="imes">S</span>
      <div class="imebar">
        <span class="imec">中</span>
        <span class="imec">°,</span>
        <svg width="12" height="17" viewBox="0 0 12 17"><rect x="3.500" y="0" width="5" height="10" rx="2.500" fill="#1470c0" /><path d="M1 6c0 7 10 7 10 0M6 12v4M2.500 16h7" fill="none" stroke="#1470c0" stroke-width="1.500" /></svg>
        <svg width="16" height="14" viewBox="0 0 16 14"><rect width="16" height="14" rx="2" fill="#1470c0" /><path d="M2 4h12M2 7h12M4 10h8" stroke="#fff" stroke-dasharray="1.500 1" /></svg>
        <svg width="15" height="16" viewBox="0 0 15 16"><circle cx="6" cy="4" r="3.500" fill="#a8b8c8" /><path d="M1 15c0-8 10-8 10 0z" fill="#a8b8c8" /><path d="M8 10h7v6H8z" fill="#e8f0f8" stroke="#a8b8c8" /></svg>
        <svg width="15" height="15" viewBox="0 0 15 15"><path d="M4 0h7l4 3-2 3-2-1v10H4V5L2 6 0 3z" fill="#1470c0" /></svg>
        <svg width="15" height="15" viewBox="0 0 15 15"><path d="M2 15L0 13 7 6C6 3 8 0 12 0L10 3 12 5 15 3C15 7 12 9 9 8z" fill="#1470c0" /></svg>
      </div>
    </div>
  </div>
</template>

<style scoped>
.app {
  position: relative;
  width: 1366px;
  height: 768px;
  overflow: hidden;
  display: flex;
  flex-direction: column;
  background: #f1f1f1;
  color: #111;
  font: 12px/16px "Noto Sans CJK SC", sans-serif;
}
.defs { position: absolute; }
.l { font: 11px/16px "Liberation Mono", monospace; letter-spacing: -.6px; }
.ic { width: 16px; height: 16px; flex: none; display: block; }

.title { height: 23px; flex: none; display: flex; align-items: center; background: #fff; }
.logo { width: 16px; height: 16px; margin: 0 5px 0 3px; }
.ttext { color: #7d7d7d; white-space: nowrap; letter-spacing: .3px; }
.wctl { margin-left: auto; display: flex; }
.wctl svg { width: 46px; height: 20px; }

.menubar { height: 30px; flex: none; display: flex; align-items: center; padding-left: 7px; background: #f4f5f6; white-space: nowrap; }
.mi { margin-right: 10.500px; }
.nd { margin: 0 4px 0 -1px; }
.mi2 { margin-right: 6px; }
.bear { margin: 0 4px 0 5px; }
.notice { width: 186px; height: 30px; box-sizing: border-box; margin-left: 7px; padding-left: 27px; line-height: 30px; color: #0b6a6a; background: #fafbfb; }
.user { width: 17px; height: 17px; margin-left: 7px; margin-right: 4px; }
.phone { font-family: "Noto Sans CJK SC", sans-serif; letter-spacing: .3px; }
.d2 { margin: 0 9px 0 6px; }
.bell { margin: 0 0 0 8px; }
.mend { margin-left: auto; margin-right: 4px; }
.more { font: bold 13px/10px "Liberation Sans", sans-serif; align-self: flex-start; padding-top: 4px; }
.drop { display: inline-block; width: 0; height: 0; margin-left: 3px; border: 3px solid transparent; border-top: 3px solid #222; border-bottom: 0; }
.gd { border-top-color: #777; }

.toolbar { height: 31px; flex: none; box-sizing: border-box; display: flex; gap: 2px; padding-bottom: 3px; }
.band { height: 28px; box-sizing: border-box; display: flex; align-items: center; gap: 8px; background: linear-gradient(#f8f9fa, #f0f1f3); border-radius: 3px; position: relative; white-space: nowrap; }
.b1 { width: 150px; padding-left: 5px; gap: 7px; }
.b1 .o1 { width: 18px; height: 18px; margin-left: 1px; }
.b1 .drop { margin-left: -1px; }
.b2 { width: 551px; padding-left: 5px; }
.b2 .sigma { margin-left: 2px; }
.b2 .ti:nth-child(4) { margin-right: -3px; }
.b3 { flex: 1; gap: 6px; }
.sep { width: 1px; height: 22px; flex: none; background: #c9c9c9; }
.s2 { margin-right: -4px; }
.s3 { margin-right: -3px; }
.ti { display: flex; align-items: center; gap: 4px; white-space: nowrap; }
.off { color: #8a8a8a; }
.sigma { width: 12px; text-align: center; font: bold 14px/16px "Liberation Serif", serif; }
.mb { position: absolute; right: 2px; top: 2px; }
.mr { position: absolute; right: 4px; top: 2px; }
.b2 .mr { right: 8px; }
.combo2 { width: 62px; height: 23px; box-sizing: border-box; margin-left: 1px; display: flex; align-items: center; gap: 4px; padding-left: 3px; border: 1px solid #777; color: #8a8a8a; background: #f4f4f4; }
.sq { width: 13px; height: 13px; background: #dedede; border: 1px solid #c4c4c4; }

.main { flex: 1; min-height: 0; display: flex; }
.nav { width: 165px; flex: none; display: flex; flex-direction: column; }
.navhead { height: 14px; display: flex; align-items: center; border: 1px solid #8a8a8a; border-left: 0; border-radius: 0 2px 2px 0; margin-bottom: 1px; }
.pin { width: 9px; height: 12px; margin-left: auto; margin-right: 13px; }
.navx { font: 15px/14px "Liberation Sans", sans-serif; margin-right: 3px; color: #333; }
.navbtn { height: 22px; padding: 0; margin: 0 0 0 1px; font: 12px/20px "Noto Sans CJK SC", sans-serif; color: #111; background: #f0f0f0; border: 1px solid #a3a3a3; }
.navtools { height: 26px; margin: 1px 1px 0 2px; display: flex; align-items: center; gap: 5px; padding-left: 5px; box-sizing: border-box; background: linear-gradient(#fbfbfb, #ececec); }
.treebox { height: 487px; flex: none; margin: 0 2px; box-sizing: border-box; display: flex; background: #fff; border: 1px solid #909090; border-bottom-width: 2px; overflow: hidden; }
.rows { flex: 1; padding-top: 1px; min-width: 0; }
.row { height: 16px; position: relative; display: flex; align-items: center; white-space: nowrap; }
.k-c::before, .k-e::before { content: ""; position: absolute; left: 13px; top: 0; bottom: 0; border-left: 1px dotted #666; }
.leaf { position: relative; display: flex; align-items: center; gap: 4px; height: 16px; margin-left: 41px; padding: 0 5px 0 2px; }
.leaf::before { content: ""; position: absolute; left: -8px; top: 8px; width: 9px; border-top: 1px dotted #666; }
.leaf::after { content: ""; position: absolute; left: -8px; top: 0; height: 8px; border-left: 1px dotted #666; }
.k-c .leaf::after { height: 16px; }
.cur { background: #d6d6d6; }
.chev { width: 9px; height: 9px; margin-left: 9px; flex: none; }
.fold { margin-left: 5px; margin-right: 5px; }
.vs { flex: none; width: 15px; display: flex; flex-direction: column; background: #f0f0f0; }
.vs1 { margin: 0 1px 0 0; }
.ar { width: 15px; height: 16px; padding: 4px 2px; box-sizing: border-box; flex: none; }
.gap1 { height: 39px; flex: none; }
.thumb { background: #cdcdcd; flex: none; }
.th1 { height: 386px; }
.fill { flex: 1; }
.below { margin-top: 1px; }

.work { flex: 1; min-width: 0; display: flex; flex-direction: column; }
.wtools { height: 26px; flex: none; margin-left: 5px; padding-left: 5px; display: flex; align-items: center; gap: 6px; white-space: nowrap; background: linear-gradient(#f8f9fa, #f0f1f3); }
.wtools .ti .drop { margin-left: -1px; }
.floorsel { width: 62px; height: 22px; display: flex; align-items: center; justify-content: space-between; padding: 0 4px 0 2px; box-sizing: border-box; background: #fff; margin-left: -1px; }
.wbody { flex: 1; min-height: 0; display: flex; padding: 6px 0 0 7px; background: #f1f1f1; }
.comp { width: 182px; flex: none; display: flex; flex-direction: column; margin-bottom: 1px; background: #fff; }
.searchrow { height: 25px; flex: none; display: flex; padding-top: 1px; box-sizing: border-box; }
.sinput { width: 156px; box-sizing: border-box; border: 1px solid #909090; padding-left: 2px; color: #8d8d8d; font-size: 14px; line-height: 21px; }
.sbtn { flex: 1; display: flex; align-items: center; justify-content: center; }
.ctree { flex: 1; border: 1px solid #909090; border-bottom-width: 2px; padding-top: 1px; }
.cn { height: 16px; display: flex; align-items: center; position: relative; }
.root { height: 17px; }
.root .chev { margin: 0 6px 0 5px; }
.root span { margin-left: 6px; }
.kid { padding-left: 39px; }
.kid::before { content: ""; position: absolute; left: 30px; top: -2px; bottom: 7px; border-left: 1px dotted #666; }
.kid::after { content: ""; position: absolute; left: 30px; top: 8px; width: 9px; border-top: 1px dotted #666; }
.zrow { width: 51px; height: 16px; display: flex; align-items: center; padding-left: 3px; box-sizing: border-box; }
.g { width: 12px; height: 12px; margin-right: 7px; }
.zn { font: 11px/16px "Liberation Mono", monospace; letter-spacing: -.6px; }
.on { background: #2f6bc4; color: #fff; }
.prop { flex: 1; min-width: 0; margin: -4px 0 2px 7px; display: flex; flex-direction: column; background: #fff; }
.tabs { height: 23px; flex: none; box-sizing: border-box; display: flex; border-bottom: 1px solid #c8c8c8; padding-left: 1px; background: #fff; }
.tab { width: 59px; height: 22px; text-align: center; line-height: 21px; border: 1px solid #d8d8d8; border-bottom: 0; box-sizing: border-box; background: #fff; }
.pbox { flex: 1; margin: 1px 0 1px 1px; border: 1px solid #a0a0a0; border-right: 0; padding: 1px 0 0 1px; }
.phead, .prow { display: flex; }
.phead { height: 23px; border-bottom: 1px solid #b4b4b4; box-sizing: border-box; line-height: 22px; }
.prow { height: 19px; box-sizing: border-box; border-bottom: 1px solid #b4b4b4; line-height: 18px; }
.p0 { width: 21px; flex: none; text-align: center; border-right: 1px solid #b4b4b4; background: #f3f3f3; }
.p1 { width: 190px; flex: none; border-right: 1px solid #b4b4b4; }
.phead .p1 { text-align: center; background: linear-gradient(#fff, #f0f0f0); }
.p2 { width: 125px; flex: none; border-right: 1px solid #b4b4b4; }
.hot { text-align: center; color: #7b0f7b; background: linear-gradient(#fbdda5, #f5c56b); }
.phead .p3 { padding-left: 3px; }
.p3 { flex: 1; display: flex; align-items: center; padding-left: 9px; }
.name { padding-left: 20px; box-sizing: border-box; color: #111; white-space: nowrap; display: block; }
.val { padding-left: 2px; box-sizing: border-box; white-space: nowrap; }
.blue .name { color: #0000f0; }
.gray .name, .gray .val { color: #808080; }
.sel .num { background: #fdd28e; color: #7b0f7b; }
.sel .name { background: #0078d7; color: #fff; }
.sel .val { background: #d8e8f7; }
.chk { width: 12px; height: 12px; border: 1px solid #555; box-sizing: border-box; background: #fff; }
.pls { position: absolute; margin-left: -17px; margin-top: 3px; width: 11px; height: 11px; box-sizing: border-box; border: 1px solid #999; background: #fff; color: #222; font: 11px/9px "Liberation Sans", sans-serif; text-align: center; }

.status { height: 20px; flex: none; margin-top: 2px; display: flex; gap: 3px; }
.sc { box-sizing: border-box; height: 20px; line-height: 18px; border: 1px solid #dcdcdc; background: linear-gradient(#fbfbfb, #efefef); padding-left: 2px; white-space: nowrap; }
.w0 { width: 148px; }
.w1 { width: 77px; }
.w2 { width: 97px; }
.w3 { width: 48px; }
.w4 { flex: 1; }
.w5 { width: 72px; }

.taskbar { height: 40px; flex: none; display: flex; background: #030f14; color: #fff; }
.start { width: 48px; flex: none; display: flex; align-items: center; justify-content: center; background: #000; }
.tsearch { width: 344px; flex: none; padding-left: 8px; display: flex; align-items: center; gap: 4px; box-sizing: border-box; background: #333; color: #8f8f8f; font-size: 14px; }
.tmic { margin-left: auto; margin-right: 14px; }
.tapp { width: 49.700px; flex: none; display: flex; align-items: center; justify-content: center; position: relative; }
.a-gapp::after, .a-green::after, .a-active::after { content: ""; position: absolute; left: 5px; right: 5px; bottom: 0; height: 2px; background: #76b9ed; }
.a-active { background: #3a4347; }
.a-active::after { left: 0; right: 0; }
.tray { width: 380px; margin-left: auto; flex: none; display: flex; align-items: center; }
.cpu { width: 64px; flex: none; display: flex; flex-direction: column; align-items: center; font-size: 12px; line-height: 20px; color: #eee; }
.tc { flex: none; display: flex; justify-content: center; align-items: center; }
.c1 { width: 28px; }
.c2, .c3 { width: 24px; }
.c4 { width: 22px; }
.c5 { width: 32px; }
.c6 { width: 26px; font-size: 13px; }
.c7 { width: 32px; }
.sg { width: 16px; height: 18px; text-align: center; border-radius: 3px; transform: rotate(-8deg); background: #f0561d; color: #fff; font: bold 15px/18px "Liberation Sans", sans-serif; }
.clock { width: 74px; flex: none; display: flex; flex-direction: column; align-items: center; line-height: 20px; color: #eee; }
.notif { flex: 1; position: relative; display: flex; justify-content: center; padding-right: 6px; box-sizing: border-box; height: 100%; align-items: flex-start; padding-top: 7px; }
.badge { position: absolute; left: 21px; top: 19px; width: 18px; height: 18px; border-radius: 50%; background: #2e2e2e; border: 1px solid #666; text-align: center; font: bold 11px/16px "Liberation Sans", sans-serif; box-sizing: border-box; }

.dialog { position: absolute; left: 720px; top: 80px; width: 670px; height: 583px; display: flex; flex-direction: column; box-sizing: border-box; border: 1px solid #3a96e6; background: #f0f0f0; box-shadow: 0 3px 8px rgba(0, 0, 0, .25); }
.dhead { height: 25px; flex: none; background: #fff; padding-left: 2px; line-height: 23px; }
.dbody { flex: 1; display: flex; min-height: 0; padding: 16px 0 0 8px; box-sizing: border-box; }
.grp { position: relative; box-sizing: border-box; border: 1px solid #dcdcdc; }
.legend { position: absolute; left: 6px; top: -10px; background: #f0f0f0; line-height: 16px; }
.shapes { width: 481px; height: 498px; flex: none; padding: 9px 1px 0 4px; }
.shapeinner { height: 487px; overflow: hidden; display: flex; }
.cardgrid { width: 456px; flex: none; display: grid; grid-template-columns: repeat(3, 148px); grid-auto-rows: 158px; gap: 4px; }
.card { box-sizing: border-box; padding: 8px 3px; border: 1px solid; border-color: #fff #a0a0a0 #a0a0a0 #fff; background: #f0f0f0; }
.picked { background: #00ffff; border-color: #f0f0f0 #a0a0a0 #a0a0a0 #f0f0f0; }
.vs2 { margin-left: 2px; height: 487px; }
.th2 { height: 276px; }
.dg { width: 140px; height: 140px; display: block; background: #6f91a8; }
.big { width: 210px; height: 210px; display: block; background: #6f91a8; flex: none; }
.dg *, .big * { fill: none; }
.dg .ye, .big .ye { stroke: #d6d64e; stroke-width: .8; }
.dg .dash { stroke: #c8c85e; stroke-width: .7; stroke-dasharray: 1.500 1.500; }
.dg .ln, .big .ln { stroke: #3c4a55; stroke-width: .8; }
.dg .dm, .big .dm { stroke: #25303a; stroke-width: .8; }
.dg .dots { stroke: #d9ecec; stroke-width: 1.500; stroke-dasharray: 1 2.500; }
.dg .capb { stroke: #a7c1bf; stroke-width: 5.500; stroke-linecap: round; opacity: .5; }
.dg .capd { stroke: #e3eee4; stroke-width: 3.500; stroke-dasharray: .8 1.500; }
.dg .bright { stroke: #ffff00; stroke-width: .8; }
.dg .bk { stroke: #000; stroke-width: .9; }
.dg .mix { stroke: #000; stroke-width: .9; stroke-dasharray: 2.500 2.500; }
text { text-anchor: middle; dominant-baseline: central; }
.dg .w, .big .w { fill: #f0f3f5; font: 16px "Liberation Serif", serif; }
.dg .c, .big .c { fill: #2f2c80; font: 18px "Noto Sans CJK SC", sans-serif; }
.dg .rp, .big .rp { transform-box: fill-box; transform-origin: center; transform: rotate(90deg); }
.dg .s { font-family: "Liberation Serif", serif; }
.dg .t { font-size: 19px; }
.dg .t2 { font-size: 18.500px; }
.dg .b { font-size: 20px; font-weight: 700; }
.dg .b2 { fill: #fff; font: bold 11px "Liberation Serif", serif; }

.dright { flex: 1; padding: 0 0 0 24px; min-width: 0; display: flex; flex-direction: column; }
.pgrid { height: 266px; flex: none; margin-top: -7px; box-sizing: border-box; border: 1px solid #a0a0a0; background: #fff; padding: 1px; }
.gh, .gr { display: flex; }
.gh { height: 23px; border-bottom: 1px solid #b4b4b4; line-height: 22px; }
.gr { height: 19px; box-sizing: border-box; border-bottom: 1px solid #b4b4b4; line-height: 18px; }
.g0 { width: 20px; flex: none; text-align: center; background: #f3f3f3; border-right: 1px solid #b4b4b4; }
.g1 { width: 90px; flex: none; text-align: center; background: linear-gradient(#fff, #f0f0f0); border-right: 1px solid #b4b4b4; }
.g2 { flex: 1; }
.pname { text-align: left; padding-left: 2px; box-sizing: border-box; background: #fff; line-height: 18px; }
.pval { padding-left: 2px; }
.gr.sel .pname { background: #0078d7; color: #fff; }
.gr.sel .pval { background: #d8e8f7; }
.gr.sel .num { background: #fdd28e; color: #7b0f7b; }
.preview { margin: 13px 0 0 -8px; height: 225px; padding: 10px 0 0 7px; }
.dfoot { height: 42px; flex: none; box-sizing: border-box; padding: 12px 0 0 569px; }
.ok { display: block; width: 72px; height: 22px; padding: 0; box-sizing: border-box; border: 2px solid #0078d7; background: #e1e1e1; font: 12px/18px "Noto Sans CJK SC", sans-serif; color: #111; }

.redring { position: absolute; left: 862px; top: 247px; }

.ime { position: absolute; left: 866px; top: 3px; width: 187px; height: 24px; display: flex; }
.imes { position: absolute; left: 1px; top: -2px; width: 26px; height: 28px; border-radius: 4px; transform: rotate(-7deg); background: #f0561d; color: #fff; text-align: center; font: bold 25px/28px "Liberation Sans", sans-serif; z-index: 1; }
.imebar { flex: 1; margin-left: 22px; box-sizing: border-box; padding-left: 13px; display: flex; align-items: center; gap: 7px; background: #fff; border: 1px solid #b9d3ea; }
.imec { width: 15px; color: #1470c0; font: bold 14px/16px "Noto Sans CJK SC", sans-serif; }
</style>

<style>
html, body { margin: 0; background: #f1f1f1; }
</style>
